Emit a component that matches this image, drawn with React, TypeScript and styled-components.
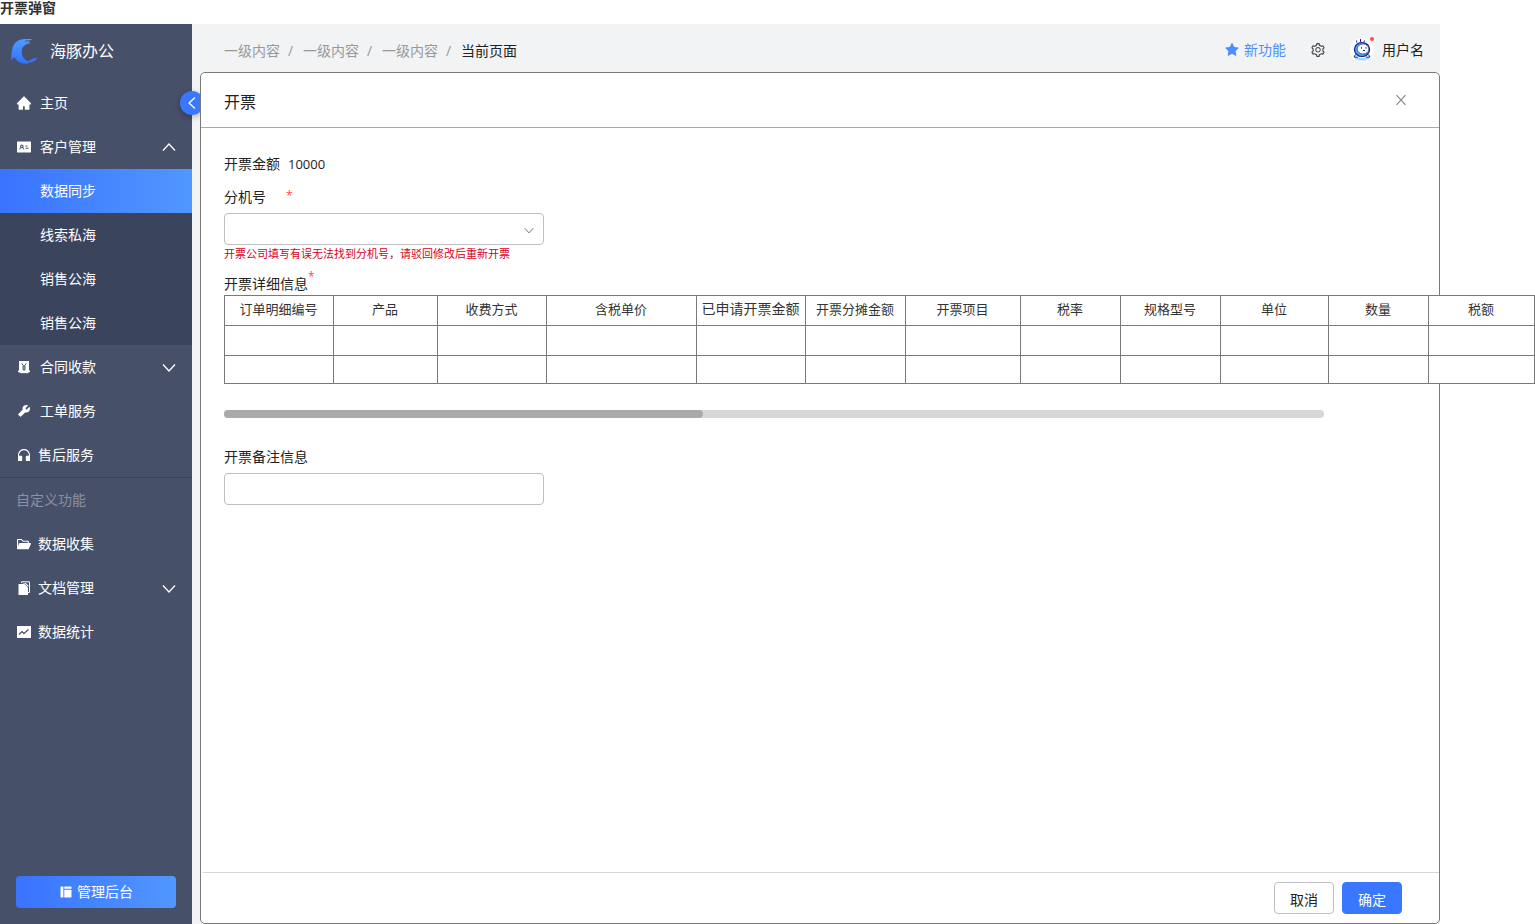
import React from "react";
import styled, { createGlobalStyle } from "styled-components";
import {
  AiFillHome,
  AiFillIdcard,
  AiFillTool,
  AiFillCustomerService,
  AiFillFolderOpen,
  AiFillLayout,
  AiFillStar,
  AiOutlineSetting,
} from "react-icons/ai";

const GlobalStyle = createGlobalStyle`
  *, *::before, *::after { box-sizing: border-box; }
  body {
    margin: 0;
    background: #fff;
    color: #222;
    font-family: "Open Sans", "Noto Sans CJK SC", sans-serif;
    font-size: 14px;
    line-height: 20px;
  }
  button, input, select { font: inherit; color: inherit; }
  svg { display: block; flex: none; }
`;

const Page = styled.div`
  display: flex;
  flex-direction: column;
  min-height: 100vh;
  overflow-x: hidden;
`;

const PageTitle = styled.h1`
  margin: 0;
  height: 24px;
  font-family: "Liberation Sans", "Noto Sans CJK SC", sans-serif;
  font-size: 14px;
  line-height: 16px;
  font-weight: 700;
  color: #333;
`;

const Shell = styled.div`
  flex: 1;
  display: flex;
  margin-right: 95px;
  background: #f1f3f5;
`;

const Sidebar = styled.aside`
  position: relative;
  flex: none;
  display: flex;
  flex-direction: column;
  width: 192px;
  background: #475069;
  color: #fff;
`;

const Brand = styled.div`
  display: flex;
  align-items: center;
  gap: 8px;
  height: 57px;
  padding: 0 8px 4px;
  font-size: 16px;
`;

const Collapse = styled.button`
  position: absolute;
  top: 67px;
  right: -12px;
  display: grid;
  place-items: center;
  width: 24px;
  height: 24px;
  padding: 0;
  border: 0;
  border-radius: 50%;
  background: #3977ff;
  color: #fff;
  box-shadow: 0 2px 6px rgba(0, 0, 0, 0.3);
`;

const Nav = styled.nav`
  display: flex;
  flex-direction: column;
`;

const NavLink = styled.a<{ $gap: number }>`
  display: flex;
  align-items: center;
  gap: ${(p) => p.$gap}px;
  height: 44px;
  padding: 0 16px;
  color: #fff;
  text-decoration: none;
  & > :last-child:not(span) { margin-left: auto; }
`;

const SubNav = styled.div`
  background: #3a445d;
`;

const SubLink = styled.a<{ $active?: boolean }>`
  display: flex;
  align-items: center;
  height: 44px;
  padding-left: 40px;
  color: #fff;
  text-decoration: none;
  background: ${(p) => (p.$active ? "linear-gradient(90deg, #3973ff, #5197ff)" : "none")};
`;

const NavHeading = styled.h2`
  margin: 0;
  padding: 0 16px;
  border-top: 1px solid #3a445d;
  font-size: 14px;
  font-weight: 400;
  line-height: 44px;
  color: #8a90a0;
`;

const AdminButton = styled.button`
  display: flex;
  align-items: center;
  justify-content: center;
  gap: 4px;
  height: 32px;
  margin: auto 16px 16px;
  border: 0;
  border-radius: 4px;
  background: linear-gradient(90deg, #3973ff, #5197ff);
  color: #fff;
`;

const Main = styled.main`
  flex: 1;
  min-width: 0;
  display: flex;
  flex-direction: column;
  padding-left: 8px;
`;

const TopBar = styled.header`
  display: flex;
  align-items: center;
  justify-content: space-between;
  height: 48px;
  padding: 4px 16px 0 24px;
`;

const Crumbs = styled.nav`
  display: flex;
  padding-top: 2px;
  color: #999;
  a { color: inherit; text-decoration: none; }
`;

const Slash = styled.span`
  width: 23px;
  padding-right: 2px;
  text-align: center;
`;

const Current = styled.span`
  color: #222;
`;

const Tools = styled.div`
  display: flex;
  align-items: center;
`;

const Feature = styled.a`
  display: flex;
  align-items: center;
  gap: 4px;
  margin-right: 24px;
  color: #4c8dff;
  text-decoration: none;
`;

const IconButton = styled.button`
  display: grid;
  place-items: center;
  padding: 0;
  border: 0;
  background: none;
  color: ${(p) => p.color};
`;

const User = styled.div`
  display: flex;
  align-items: center;
  gap: 8px;
  margin-left: 24px;
`;

const Avatar = styled.div`
  position: relative;
`;

const Badge = styled.span`
  position: absolute;
  top: -1px;
  right: 0;
  width: 4px;
  height: 4px;
  border-radius: 50%;
  background: #ff4d4f;
`;

const Dialog = styled.section`
  position: relative;
  z-index: 1;
  flex: 1;
  display: flex;
  flex-direction: column;
  min-width: 0;
  border: 1px solid #797979;
  border-radius: 5px;
  background: #fff;
`;

const DialogHeader = styled.header`
  display: flex;
  align-items: center;
  justify-content: space-between;
  height: 55px;
  padding: 0 32px 0 23px;
  border-bottom: 1px solid #aaa;
`;

const DialogTitle = styled.h2`
  margin: 0;
  padding-top: 4px;
  font-size: 16px;
  font-weight: 400;
  line-height: 24px;
`;

const Form = styled.form`
  flex: 1;
  display: flex;
  flex-direction: column;
`;

const Body = styled.div`
  flex: 1;
  padding: 26px 23px;
`;

const Amount = styled.div`
  display: flex;
  gap: 8px;
  margin-bottom: 13px;
`;

const Digits = styled.span`
  font-size: 13px;
`;

const Label = styled.label<{ $gap: number }>`
  display: flex;
  gap: ${(p) => p.$gap}px;
  margin-bottom: 6px;
`;

const Required = styled.span`
  font-size: 12px;
  line-height: 18px;
  color: #ff4d4f;
`;

const SelectBox = styled.div`
  position: relative;
  width: 320px;
  svg {
    position: absolute;
    top: 12px;
    right: 10px;
    color: #666;
    pointer-events: none;
  }
`;

const Select = styled.select`
  display: block;
  width: 100%;
  height: 32px;
  border: 1px solid #bfbfbf;
  border-radius: 4px;
  background: #fff;
  appearance: none;
`;

const Input = styled.input`
  display: block;
  width: 320px;
  height: 32px;
  border: 1px solid #bfbfbf;
  border-radius: 4px;
  background: #fff;
`;

const ErrorText = styled.p`
  margin: 0 0 11px;
  font-size: 11px;
  line-height: 18px;
  color: #d9001b;
`;

const TableTitle = styled.div`
  display: flex;
  height: 21px;
  ${Required} { line-height: 6px; }
`;

const Table = styled.table`
  width: 1311px;
  table-layout: fixed;
  border-collapse: collapse;
  background: #fff;
  color: #333;
  th, td {
    height: 30px;
    padding: 0;
    border: 1px solid #797979;
  }
  tr:last-child td { height: 28px; }
`;

const HeadCell = styled.th<{ $large: boolean }>`
  && { padding: 0 1px 3px 0; }
  font-size: ${(p) => (p.$large ? 14 : 13)}px;
  font-weight: 400;
  text-align: center;
  white-space: nowrap;
`;

const Track = styled.div`
  height: 8px;
  margin: 26px 92px 29px 0;
  border-radius: 4px;
  background: #d7d7d7;
`;

const Thumb = styled.div`
  width: 479px;
  height: 8px;
  border-radius: 4px;
  background: #aaa;
`;

const DialogFooter = styled.footer`
  display: flex;
  justify-content: flex-end;
  gap: 8px;
  margin-left: 2px;
  padding: 9px 37px 9px 0;
  border-top: 1px solid #d7d7d7;
`;

const Button = styled.button<{ $primary?: boolean }>`
  width: 60px;
  height: 32px;
  padding: 3px 0 0;
  border: 1px solid ${(p) => (p.$primary ? "#3977ff" : "#bfbfc4")};
  border-radius: 4px;
  background: ${(p) => (p.$primary ? "#3977ff" : "#fff")};
  color: ${(p) => (p.$primary ? "#fff" : "#222")};
`;

type Column = { name: string; width: number; large?: boolean };

const columns: Column[] = [
  { name: "订单明细编号", width: 109 },
  { name: "产品", width: 104 },
  { name: "收费方式", width: 109 },
  { name: "含税单价", width: 150 },
  { name: "已申请开票金额", width: 109, large: true },
  { name: "开票分摊金额", width: 100 },
  { name: "开票项目", width: 115 },
  { name: "税率", width: 100 },
  { name: "规格型号", width: 100 },
  { name: "单位", width: 108 },
  { name: "数量", width: 100 },
  { name: "税额", width: 106 },
];

const chevrons = {
  down: "M1 4.500L7 11L13 4.500",
  up: "M1 10.500L7 4L13 10.500",
  left: "M10 1.500L4 7L10 12.500",
};

const Chevron = ({ to, size = 14 }: { to: keyof typeof chevrons; size?: number }) => (
  <svg width={size} height={size} viewBox="0 0 14 14" aria-hidden="true">
    <path d={chevrons[to]} fill="none" stroke="currentColor" strokeWidth="1.300" />
  </svg>
);

const Cross = () => (
  <svg width="12" height="12" viewBox="0 0 12 12" aria-hidden="true">
    <path d="M1.500 1.200l9 9.600M10.500 1.200l-9 9.600" fill="none" stroke="currentColor" strokeWidth="1.200" />
  </svg>
);

const Dolphin = () => (
  <svg width="34" height="32" viewBox="0 0 34 32" aria-hidden="true">
    <defs>
      <linearGradient id="dolphin" x1="0" y1="0" x2="0" y2="1">
        <stop offset="0" stopColor="#4f9bff" />
        <stop offset="1" stopColor="#3370ff" />
      </linearGradient>
    </defs>
    <path
      fill="url(#dolphin)"
      d="M24 4C21 4.300 18 3.500 14.500 4.200C9 5 5.500 8.500 4.500 13C3.500 17 3.200 20.500 3.300 25L6.500 22C8.500 26 12 28.500 17 28.500L20 29.200L19.500 27.800C24 27.500 28 26 29.500 22.500C27 24 24.500 23.200 21 26C16 25.500 13.500 21 13.800 16C14 12 16.500 9.500 21 8.500L22.500 8L20.500 7.300Z"
    />
    <path d="M17 6.200l5.500-.7" stroke="#475069" strokeWidth=".8" />
  </svg>
);

const Robot = () => (
  <svg width="24" height="24" viewBox="0 0 24 24" aria-hidden="true">
    <circle cx="12" cy="12" r="12" fill="#fff" />
    <path d="M5 20h14v1.500h-3v1H8v-1H5z" fill="#9bdcff" />
    <path d="M7 4.500L6.500 2.500M10.500 4V1M14 4l.5-1.500M5.500 16.500L4 19l4 .3M18.500 16.500l1.500 2.500-4 .3" fill="none" stroke="#1b1f80" />
    <ellipse cx="12" cy="11.500" rx="7.600" ry="7" fill="#4ba3ff" stroke="#1b1f80" strokeWidth="1.200" />
    <ellipse cx="13" cy="11" rx="5.800" ry="5" fill="#fff" stroke="#1b1f80" strokeWidth=".6" />
    <path d="M11.500 9.200v1.500M16 9.200v1.500M13 12.500h2" fill="none" stroke="#1b1f80" />
  </svg>
);

const MoneyIcon = () => (
  <svg width="16" height="16" viewBox="0 0 16 16" aria-hidden="true">
    <path d="M3 2h10v9.500h1V13c-1.500.3-2 1.300-3 1.300S9 14 8 14s-2 .5-3 .3S3.500 13.300 2 13v-1.500h1z" fill="currentColor" />
    <path d="M5.800 4.500L8 7.500l2.200-3M8 7.500V12M6.200 8h3.600M6.200 10h3.600" fill="none" stroke="#475069" />
  </svg>
);

const DocsIcon = () => (
  <svg width="16" height="16" viewBox="0 0 16 16" aria-hidden="true">
    <path d="M5.500 3V1.800H13.500V12.500H12" fill="none" stroke="currentColor" />
    <path d="M2.500 4h6L12 7.500V15H2.500z" fill="currentColor" />
    <path d="M7 3h2.800L12.500 5.800V6.500h-.8L8.800 3.500H7z" fill="currentColor" />
  </svg>
);

const ChartIcon = () => (
  <svg width="16" height="16" viewBox="0 0 16 16" aria-hidden="true">
    <rect x="1" y="2" width="14" height="12" fill="currentColor" />
    <path d="M3 10.500l3-3 2 2L12.500 5.500" fill="none" stroke="#475069" strokeWidth="1.200" />
  </svg>
);

export default function App() {
  return (
    <Page>
      <GlobalStyle />
      <PageTitle>开票弹窗</PageTitle>
      <Shell>
        <Sidebar>
          <Brand>
            <Dolphin />
            <span>海豚办公</span>
          </Brand>
          <Collapse type="button" aria-label="收起菜单">
            <Chevron to="left" />
          </Collapse>
          <Nav>
            <NavLink href="#" $gap={8}><AiFillHome size={16} /><span>主页</span></NavLink>
            <NavLink href="#" $gap={8}><AiFillIdcard size={16} /><span>客户管理</span><Chevron to="up" /></NavLink>
            <SubNav>
              <SubLink href="#" $active>数据同步</SubLink>
              <SubLink href="#">线索私海</SubLink>
              <SubLink href="#">销售公海</SubLink>
              <SubLink href="#">销售公海</SubLink>
            </SubNav>
            <NavLink href="#" $gap={8}><MoneyIcon /><span>合同收款</span><Chevron to="down" /></NavLink>
            <NavLink href="#" $gap={8}><AiFillTool size={16} /><span>工单服务</span></NavLink>
            <NavLink href="#" $gap={6}><AiFillCustomerService size={16} /><span>售后服务</span></NavLink>
            <NavHeading>自定义功能</NavHeading>
            <NavLink href="#" $gap={6}><AiFillFolderOpen size={16} /><span>数据收集</span></NavLink>
            <NavLink href="#" $gap={6}><DocsIcon /><span>文档管理</span><Chevron to="down" /></NavLink>
            <NavLink href="#" $gap={6}><ChartIcon /><span>数据统计</span></NavLink>
          </Nav>
          <AdminButton type="button"><AiFillLayout size={14} />管理后台</AdminButton>
        </Sidebar>
        <Main>
          <TopBar>
            <Crumbs aria-label="面包屑">
              <a href="#">一级内容</a><Slash>/</Slash>
              <a href="#">一级内容</a><Slash>/</Slash>
              <a href="#">一级内容</a><Slash>/</Slash>
              <Current>当前页面</Current>
            </Crumbs>
            <Tools>
              <Feature href="#"><AiFillStar size={16} />新功能</Feature>
              <IconButton type="button" aria-label="设置" color="#444"><AiOutlineSetting size={16} /></IconButton>
              <User>
                <Avatar><Robot /><Badge /></Avatar>
                <span>用户名</span>
              </User>
            </Tools>
          </TopBar>
          <Dialog role="dialog" aria-labelledby="dialog-title">
            <DialogHeader>
              <DialogTitle id="dialog-title">开票</DialogTitle>
              <IconButton type="button" aria-label="关闭" color="#888"><Cross /></IconButton>
            </DialogHeader>
            <Form>
              <Body>
                <Amount><span>开票金额</span><Digits>10000</Digits></Amount>
                <Label htmlFor="extension" $gap={20}>分机号<Required>*</Required></Label>
                <SelectBox>
                  <Select id="extension" />
                  <Chevron to="down" size={10} />
                </SelectBox>
                <ErrorText>开票公司填写有误无法找到分机号，请驳回修改后重新开票</ErrorText>
                <TableTitle><span id="detail-title">开票详细信息</span><Required>*</Required></TableTitle>
                <Table aria-labelledby="detail-title">
                  <colgroup>
                    {columns.map(({ name, width }) => <col key={name} width={width} />)}
                  </colgroup>
                  <thead>
                    <tr>
                      {columns.map(({ name, large }) => (
                        <HeadCell key={name} scope="col" $large={!!large}>{name}</HeadCell>
                      ))}
                    </tr>
                  </thead>
                  <tbody>
                    <tr>{columns.map(({ name }) => <td key={name} />)}</tr>
                    <tr>{columns.map(({ name }) => <td key={name} />)}</tr>
                  </tbody>
                </Table>
                <Track><Thumb /></Track>
                <Label htmlFor="remark" $gap={0}>开票备注信息</Label>
                <Input id="remark" type="text" />
              </Body>
              <DialogFooter>
                <Button type="button">取消</Button>
                <Button type="submit" $primary>确定</Button>
              </DialogFooter>
            </Form>
          </Dialog>
        </Main>
      </Shell>
    </Page>
  );
}
